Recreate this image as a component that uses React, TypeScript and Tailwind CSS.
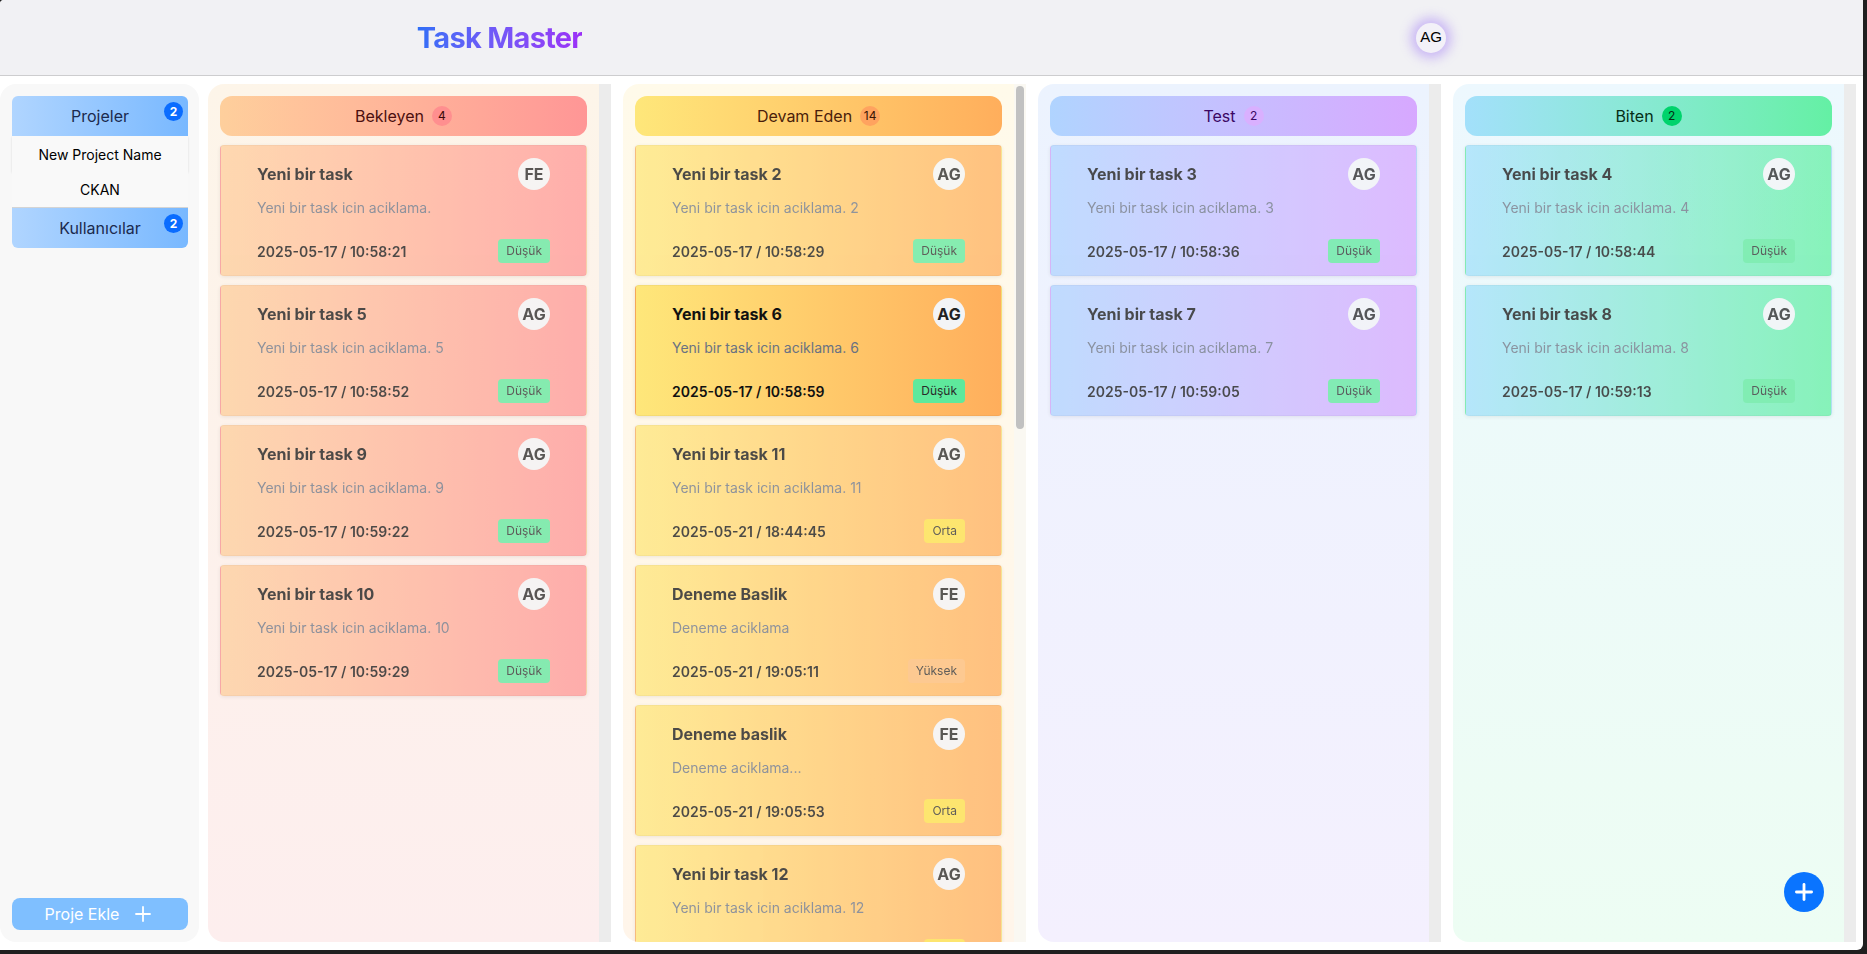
import { Plus } from "lucide-react";

type Priority = "Düşük" | "Orta" | "Yüksek";

type Task = {
  title: string;
  desc: string;
  user: string;
  date: string;
  priority: Priority;
  active?: boolean;
};

type Column = {
  name: string;
  count: number;
  panel: string;
  head: string;
  text: string;
  badge: string;
  track?: boolean;
  tasks: Task[];
};

const columns: Column[] = [
  {
    name: "Bekleyen",
    count: 4,
    panel: "bg-gradient-to-b from-[#fdf5e9] to-[#fdeeee]",
    head: "bg-gradient-to-r from-[#fecf9c] to-[#ff9696]",
    text: "text-[#4c0f0f]",
    badge: "bg-[#ff8f8f] text-[#3b0a0a]",
    tasks: [
      { title: "Yeni bir task", desc: "Yeni bir task icin aciklama.", user: "FE", date: "2025-05-17 / 10:58:21", priority: "Düşük" },
      { title: "Yeni bir task 5", desc: "Yeni bir task icin aciklama. 5", user: "AG", date: "2025-05-17 / 10:58:52", priority: "Düşük" },
      { title: "Yeni bir task 9", desc: "Yeni bir task icin aciklama. 9", user: "AG", date: "2025-05-17 / 10:59:22", priority: "Düşük" },
      { title: "Yeni bir task 10", desc: "Yeni bir task icin aciklama. 10", user: "AG", date: "2025-05-17 / 10:59:29", priority: "Düşük" },
    ],
  },
  {
    name: "Devam Eden",
    count: 14,
    panel: "bg-gradient-to-b from-[#fffaea] to-[#fff5ea]",
    head: "bg-gradient-to-r from-[#fee77a] to-[#ffae5c]",
    text: "text-[#4a1d0a]",
    badge: "bg-[#ffa35f] text-[#3a1505]",
    track: true,
    tasks: [
      { title: "Yeni bir task 2", desc: "Yeni bir task icin aciklama. 2", user: "AG", date: "2025-05-17 / 10:58:29", priority: "Düşük" },
      { title: "Yeni bir task 6", desc: "Yeni bir task icin aciklama. 6", user: "AG", date: "2025-05-17 / 10:58:59", priority: "Düşük", active: true },
      { title: "Yeni bir task 11", desc: "Yeni bir task icin aciklama. 11", user: "AG", date: "2025-05-21 / 18:44:45", priority: "Orta" },
      { title: "Deneme Baslik", desc: "Deneme aciklama", user: "FE", date: "2025-05-21 / 19:05:11", priority: "Yüksek" },
      { title: "Deneme baslik", desc: "Deneme aciklama...", user: "FE", date: "2025-05-21 / 19:05:53", priority: "Orta" },
      { title: "Yeni bir task 12", desc: "Yeni bir task icin aciklama. 12", user: "AG", date: "2025-05-21 / 19:06:20", priority: "Orta" },
    ],
  },
  {
    name: "Test",
    count: 2,
    panel: "bg-gradient-to-b from-[#ecf3fe] to-[#f4f0fe]",
    head: "bg-gradient-to-r from-[#b0d4ff] to-[#d7a8ff]",
    text: "text-[#3b0764]",
    badge: "bg-[#d9b0ff] text-[#3b0764]",
    tasks: [
      { title: "Yeni bir task 3", desc: "Yeni bir task icin aciklama. 3", user: "AG", date: "2025-05-17 / 10:58:36", priority: "Düşük" },
      { title: "Yeni bir task 7", desc: "Yeni bir task icin aciklama. 7", user: "AG", date: "2025-05-17 / 10:59:05", priority: "Düşük" },
    ],
  },
  {
    name: "Biten",
    count: 2,
    panel: "bg-gradient-to-b from-[#edf8fe] to-[#edfdf3]",
    head: "bg-gradient-to-r from-[#a3e0fb] to-[#64f0a4]",
    text: "text-[#052e16]",
    badge: "bg-[#00d36c] text-[#052e16]",
    tasks: [
      { title: "Yeni bir task 4", desc: "Yeni bir task icin aciklama. 4", user: "AG", date: "2025-05-17 / 10:58:44", priority: "Düşük" },
      { title: "Yeni bir task 8", desc: "Yeni bir task icin aciklama. 8", user: "AG", date: "2025-05-17 / 10:59:13", priority: "Düşük" },
    ],
  },
];

const priorityClass: Record<Priority, string> = {
  "Düşük": "bg-[#5ee99c]",
  Orta: "bg-[#fde047]",
  "Yüksek": "bg-[#fdba74]",
};

const TaskCard = ({ task, head }: { task: Task; head: string }) => (
  <div
    className={`shrink-0 h-[131px] rounded-[4px] border border-black/[0.04] shadow-[0_1px_4px_rgba(0,0,0,0.1)] px-9 pt-3 pb-3 flex flex-col ${head} ${
      task.active ? "opacity-100" : "opacity-75"
    }`}
  >
    <div className="h-8 flex items-center justify-between">
      <span className="text-[16px] font-bold text-[#111]">{task.title}</span>
      <span className="w-8 h-8 rounded-full bg-[#f3f4f6] flex items-center justify-center text-[16px] font-bold text-[#222]">
        {task.user}
      </span>
    </div>
    <p className="mt-2 text-[14px] leading-5 text-[#6a7282]">{task.desc}</p>
    <div className="mt-auto h-6 flex items-center justify-between">
      <span className="text-[14px] font-semibold text-[#111]">{task.date}</span>
      <span className={`px-2 h-6 leading-6 rounded-[4px] text-[12px] text-[#2a2a2a] ${priorityClass[task.priority]}`}>
        {task.priority}
      </span>
    </div>
  </div>
);

const SideButton = ({ label, rounded }: { label: string; rounded: string }) => (
  <div
    className={`relative h-10 flex items-center justify-center bg-gradient-to-r from-[#b0d5ff] to-[#78b8ff] text-[16px] text-[#1b2a4e] ${rounded}`}
  >
    {label}
    <span className="absolute top-[6px] right-[5px] w-[19px] h-[19px] rounded-full bg-[#0a6cff] text-white text-[12px] font-bold flex items-center justify-center">
      2
    </span>
  </div>
);

export default function App() {
  return (
    <div className="relative w-[1867px] h-[954px] bg-[#1f1f1f] overflow-hidden font-['Inter',sans-serif]">
      <div className="w-[1863px] h-[950px] bg-white rounded-br-md rounded-tl-sm flex flex-col overflow-hidden">
        <header className="h-[76px] shrink-0 bg-[#f1f1f4] border-b border-[#cdcdcf] flex items-center justify-around">
          <h1 className="text-[29px] font-bold tracking-tight bg-gradient-to-r from-[#2d6ff7] to-[#9b2ff7] bg-clip-text text-transparent">
            Task Master
          </h1>
          <div className="w-[30px] h-[30px] rounded-full bg-[#f3f1f8] shadow-[0_0_12px_5px_rgba(139,92,246,0.4)] flex items-center justify-center text-[15px] text-black font-['Liberation_Sans',sans-serif]">
            AG
          </div>
        </header>

        <main className="flex-1 min-h-0 flex py-2">
          <aside className="w-[199px] shrink-0 bg-[#f8f8f8] rounded-2xl pl-3 pr-[11px] py-3 flex flex-col justify-between">
            <div className="flex flex-col">
              <SideButton label="Projeler" rounded="rounded-t-md" />
              <div className="h-9 flex items-center justify-center bg-[#f9f9f9] text-[14px] text-black shadow-[0_1px_2px_rgba(0,0,0,0.12)]">
                New Project Name
              </div>
              <div className="h-9 flex items-center justify-center bg-[#f9f9f9] text-[14px] text-black border-b border-[#d4d4d4]">
                CKAN
              </div>
              <SideButton label="Kullanıcılar" rounded="rounded-b-md" />
            </div>
            <button className="h-8 rounded-lg bg-[#7fbfff] text-white text-[16px] flex items-center justify-center gap-3">
              Proje Ekle
              <Plus size={24} strokeWidth={1.8} />
            </button>
          </aside>

          <div className="ml-[9px] flex gap-3">
            {columns.map((col) => (
              <div key={col.name} className="w-[403px] h-full flex">
                <div className={`w-[391px] h-full rounded-l-2xl overflow-hidden p-3 flex flex-col gap-[9px] ${col.panel}`}>
                  <div className={`shrink-0 h-10 rounded-xl flex items-center justify-center gap-2 ${col.head}`}>
                    <span className={`text-[16px] ${col.text}`}>{col.name}</span>
                    <span className={`w-5 h-5 rounded-full flex items-center justify-center text-[12px] ${col.badge}`}>
                      {col.count}
                    </span>
                  </div>
                  {col.tasks.map((t) => (
                    <TaskCard key={t.title} task={t} head={col.head} />
                  ))}
                </div>
                {col.track ? (
                  <div className="w-3 h-full bg-[#faf8f2] pt-[2px] pl-[2px]">
                    <div className="w-2 h-[343px] rounded-full bg-[#c1c1c1]" />
                  </div>
                ) : (
                  <div className="w-3 h-full bg-[#ececec]" />
                )}
              </div>
            ))}
          </div>
        </main>
      </div>

      <button className="absolute left-[1784px] top-[872px] w-10 h-10 rounded-full bg-[#0a74ff] text-white flex items-center justify-center">
        <Plus size={26} strokeWidth={2.6} />
      </button>
    </div>
  );
}
